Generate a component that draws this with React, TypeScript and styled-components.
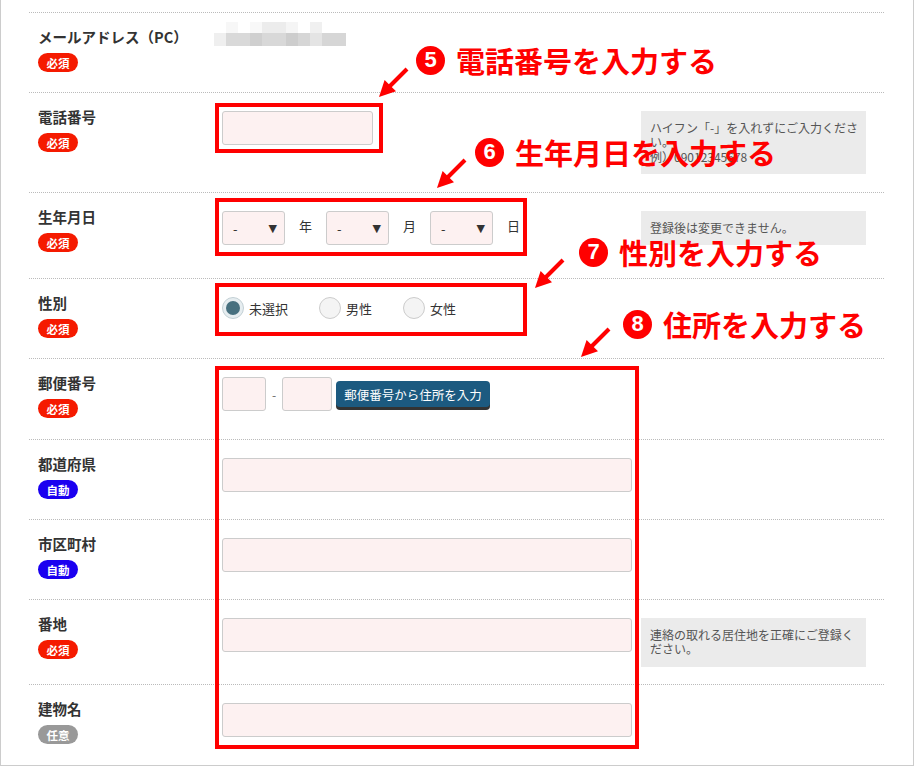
import styled, { createGlobalStyle } from "styled-components"

const GlobalStyle = createGlobalStyle`
  html, body {
    margin: 0;
    padding: 0;
    background: #fff;
  }
  body {
    font-family: "Noto Sans CJK JP", "Noto Sans", sans-serif;
    color: #333;
    overflow: hidden;
  }
`

const Frame = styled.div`
  position: relative;
  width: 914px;
  height: 766px;
  box-sizing: border-box;
  border: 1px solid #ccc;
  border-top: none;
  padding: 12px 29px 0 28px;
  background: #fff;
  overflow: hidden;
`

const Row = styled.div<{ $h: number }>`
  display: grid;
  grid-template-columns: 175px 410px 225px;
  column-gap: 9px;
  height: ${p => p.$h}px;
  box-sizing: border-box;
  padding-left: 9px;
  border-top: 1px dotted #bbb;
`

const LabelCell = styled.div`
  padding-top: 14px;
  display: flex;
  flex-direction: column;
  align-items: flex-start;
  gap: 6px;
`

const Label = styled.div`
  font-size: 14.5px;
  line-height: 20px;
  font-weight: 700;
  color: #333;
  white-space: nowrap;
`

const badgeColors = {
  req: "#f51a00",
  auto: "#1a00f0",
  opt: "#999999",
}

const Badge = styled.span<{ $kind: keyof typeof badgeColors }>`
  display: inline-flex;
  align-items: center;
  justify-content: center;
  width: 40px;
  height: 19px;
  border-radius: 10px;
  background: ${p => badgeColors[p.$kind]};
  color: #fff;
  font-size: 11.5px;
  font-weight: 700;
`

const FieldCell = styled.div`
  padding-top: 18px;
  display: flex;
  align-items: center;
  align-self: start;
`

const NoteCell = styled.div`
  padding-top: 18px;
`

const Note = styled.div`
  background: #ebebeb;
  padding: 10px 6px 10px 9px;
  font-size: 12px;
  line-height: 1.2;
  color: #555;
`

const Mosaic = styled.div`
  display: grid;
  grid-template-columns: repeat(11, 12px);
  grid-template-rows: 11px 13px;
  margin: -9px 0 0 -8px;
`

const Cell = styled.div<{ $c: string }>`
  background: ${p => p.$c};
`

const TextInput = styled.div<{ $w: number }>`
  width: ${p => p.$w}px;
  height: 34px;
  box-sizing: border-box;
  background: #fdf1f1;
  border: 1px solid #ccc;
  border-radius: 3px;
`

const SelectBox = styled.div`
  width: 63px;
  height: 34px;
  box-sizing: border-box;
  background: #fdf1f1;
  border: 1px solid #ccc;
  border-radius: 3px;
  display: flex;
  align-items: center;
  justify-content: space-between;
  padding: 0 7px 0 10px;
  font-size: 13px;
  color: #333;
`

const Caret = styled.span`
  font-size: 11px;
  font-family: "DejaVu Sans", sans-serif;
`

const DateLine = styled.div`
  display: flex;
  align-items: center;
  gap: 14px;
`

const Unit = styled.span`
  font-size: 13px;
  color: #333;
  margin-top: -6px;
`

const RadioGroup = styled.div`
  display: flex;
  align-items: center;
  gap: 31px;
`

const RadioOption = styled.label`
  display: flex;
  align-items: center;
  gap: 5px;
  font-size: 13px;
  color: #333;
`

const RadioDot = styled.span<{ $on?: boolean }>`
  position: relative;
  width: 22px;
  height: 22px;
  box-sizing: border-box;
  border-radius: 50%;
  border: 1px solid ${p => (p.$on ? "#c3d0d5" : "#ccc")};
  background: ${p => (p.$on ? "#e6edf0" : "#f4f4f4")};

  &::after {
    content: "";
    display: ${p => (p.$on ? "block" : "none")};
    position: absolute;
    left: 3px;
    top: 3px;
    width: 14px;
    height: 14px;
    border-radius: 50%;
    background: #47707f;
  }
`

const PostLine = styled.div`
  display: flex;
  align-items: center;
`

const Dash = styled.span`
  font-size: 12px;
  color: #666;
  margin: 0 6px;
`

const ZipButton = styled.button`
  margin-left: 4px;
  height: 26px;
  padding: 0 8px;
  border: none;
  border-radius: 4px;
  background: #1c5a80;
  box-shadow: 0 3px 0 #333;
  color: #fff;
  font-family: "Noto Sans CJK JP", sans-serif;
  font-size: 12.5px;
  white-space: nowrap;
`

const RedBox = styled.div<{ $x: number; $y: number; $w: number; $h: number }>`
  position: absolute;
  left: ${p => p.$x}px;
  top: ${p => p.$y}px;
  width: ${p => p.$w}px;
  height: ${p => p.$h}px;
  box-sizing: border-box;
  border: 4px solid #f00;
  pointer-events: none;
`

const Callout = styled.div<{ $x: number; $y: number }>`
  position: absolute;
  left: ${p => p.$x}px;
  top: ${p => p.$y}px;
  display: flex;
  align-items: center;
  gap: 11px;
  font-size: 29px;
  line-height: 30px;
  font-weight: 700;
  color: #f00;
  white-space: nowrap;
`

const Num = styled.span`
  flex-shrink: 0;
  width: 29px;
  height: 29px;
  border-radius: 50%;
  background: #f00;
  color: #fff;
  display: flex;
  align-items: center;
  justify-content: center;
  font-family: "Liberation Sans", Arial, sans-serif;
  font-size: 22px;
  line-height: 1;
  font-weight: 700;
`

const ArrowWrap = styled.svg<{ $x: number; $y: number }>`
  position: absolute;
  left: ${p => p.$x}px;
  top: ${p => p.$y}px;
  width: 34px;
  height: 34px;
`

const Arrow = ({ x, y }: { x: number; y: number }) => (
  <ArrowWrap $x={x} $y={y} viewBox="0 0 34 34">
    <line x1="31" y1="3" x2="13" y2="21" stroke="#f00" strokeWidth="4" />
    <polygon points="3,31 8.6,14 20,25.3" fill="#f00" />
  </ArrowWrap>
)

const topCells = ["#fff", "#f7f7f7", "#fff", "#f8f8f8", "#ececec", "#ececec", "#f5f5f5", "#fff", "#f0f0f0", "#fff", "#fff"]
const bottomCells = ["#efefef", "#d9d9d9", "#d9d9d9", "#cfcfcf", "#d8d8d8", "#d8d8d8", "#cdcdcd", "#d6d6d6", "#e4e4e4", "#d6d6d6", "#d6d6d6"]

const Select = () => (
  <SelectBox>
    <span>-</span>
    <Caret>▼</Caret>
  </SelectBox>
)

const App = () => {
  return (
    <>
      <GlobalStyle />
      <Frame>
        <Row $h={80}>
          <LabelCell>
            <Label>メールアドレス（PC）</Label>
            <Badge $kind="req">必須</Badge>
          </LabelCell>
          <FieldCell>
            <Mosaic>
              {topCells.concat(bottomCells).map((c, i) => (
                <Cell key={i} $c={c} />
              ))}
            </Mosaic>
          </FieldCell>
        </Row>

        <Row $h={100}>
          <LabelCell>
            <Label>電話番号</Label>
            <Badge $kind="req">必須</Badge>
          </LabelCell>
          <FieldCell>
            <TextInput $w={151} />
          </FieldCell>
          <NoteCell>
            <Note>
              ハイフン「-」を入れずにご入力ください。
              <br />
              例）09012345678
            </Note>
          </NoteCell>
        </Row>

        <Row $h={86}>
          <LabelCell>
            <Label>生年月日</Label>
            <Badge $kind="req">必須</Badge>
          </LabelCell>
          <FieldCell>
            <DateLine>
              <Select />
              <Unit>年</Unit>
              <Select />
              <Unit>月</Unit>
              <Select />
              <Unit>日</Unit>
            </DateLine>
          </FieldCell>
          <NoteCell>
            <Note>登録後は変更できません。</Note>
          </NoteCell>
        </Row>

        <Row $h={80}>
          <LabelCell>
            <Label>性別</Label>
            <Badge $kind="req">必須</Badge>
          </LabelCell>
          <FieldCell>
            <RadioGroup>
              <RadioOption>
                <RadioDot $on />
                未選択
              </RadioOption>
              <RadioOption>
                <RadioDot />
                男性
              </RadioOption>
              <RadioOption>
                <RadioDot />
                女性
              </RadioOption>
            </RadioGroup>
          </FieldCell>
        </Row>

        <Row $h={81}>
          <LabelCell>
            <Label>郵便番号</Label>
            <Badge $kind="req">必須</Badge>
          </LabelCell>
          <FieldCell>
            <PostLine>
              <TextInput $w={44} />
              <Dash>-</Dash>
              <TextInput $w={50} />
              <ZipButton>郵便番号から住所を入力</ZipButton>
            </PostLine>
          </FieldCell>
        </Row>

        <Row $h={80}>
          <LabelCell>
            <Label>都道府県</Label>
            <Badge $kind="auto">自動</Badge>
          </LabelCell>
          <FieldCell>
            <TextInput $w={410} />
          </FieldCell>
        </Row>

        <Row $h={80}>
          <LabelCell>
            <Label>市区町村</Label>
            <Badge $kind="auto">自動</Badge>
          </LabelCell>
          <FieldCell>
            <TextInput $w={410} />
          </FieldCell>
        </Row>

        <Row $h={85}>
          <LabelCell>
            <Label>番地</Label>
            <Badge $kind="req">必須</Badge>
          </LabelCell>
          <FieldCell>
            <TextInput $w={410} />
          </FieldCell>
          <NoteCell>
            <Note>連絡の取れる居住地を正確にご登録ください。</Note>
          </NoteCell>
        </Row>

        <Row $h={81}>
          <LabelCell>
            <Label>建物名</Label>
            <Badge $kind="opt">任意</Badge>
          </LabelCell>
          <FieldCell>
            <TextInput $w={410} />
          </FieldCell>
        </Row>

        <RedBox $x={214} $y={103} $w={168} $h={50} />
        <RedBox $x={214} $y={198} $w={312} $h={58} />
        <RedBox $x={214} $y={283} $w={312} $h={53} />
        <RedBox $x={214} $y={366} $w={424} $h={383} />

        <Arrow x={375} y={66} />
        <Arrow x={433} y={157} />
        <Arrow x={531} y={257} />
        <Arrow x={577} y={326} />

        <Callout $x={415} $y={45}>
          <Num>5</Num>電話番号を入力する
        </Callout>
        <Callout $x={474} $y={137}>
          <Num>6</Num>生年月日を入力する
        </Callout>
        <Callout $x={578} $y={237}>
          <Num>7</Num>性別を入力する
        </Callout>
        <Callout $x={622} $y={309}>
          <Num>8</Num>住所を入力する
        </Callout>
      </Frame>
    </>
  )
}

export default App
